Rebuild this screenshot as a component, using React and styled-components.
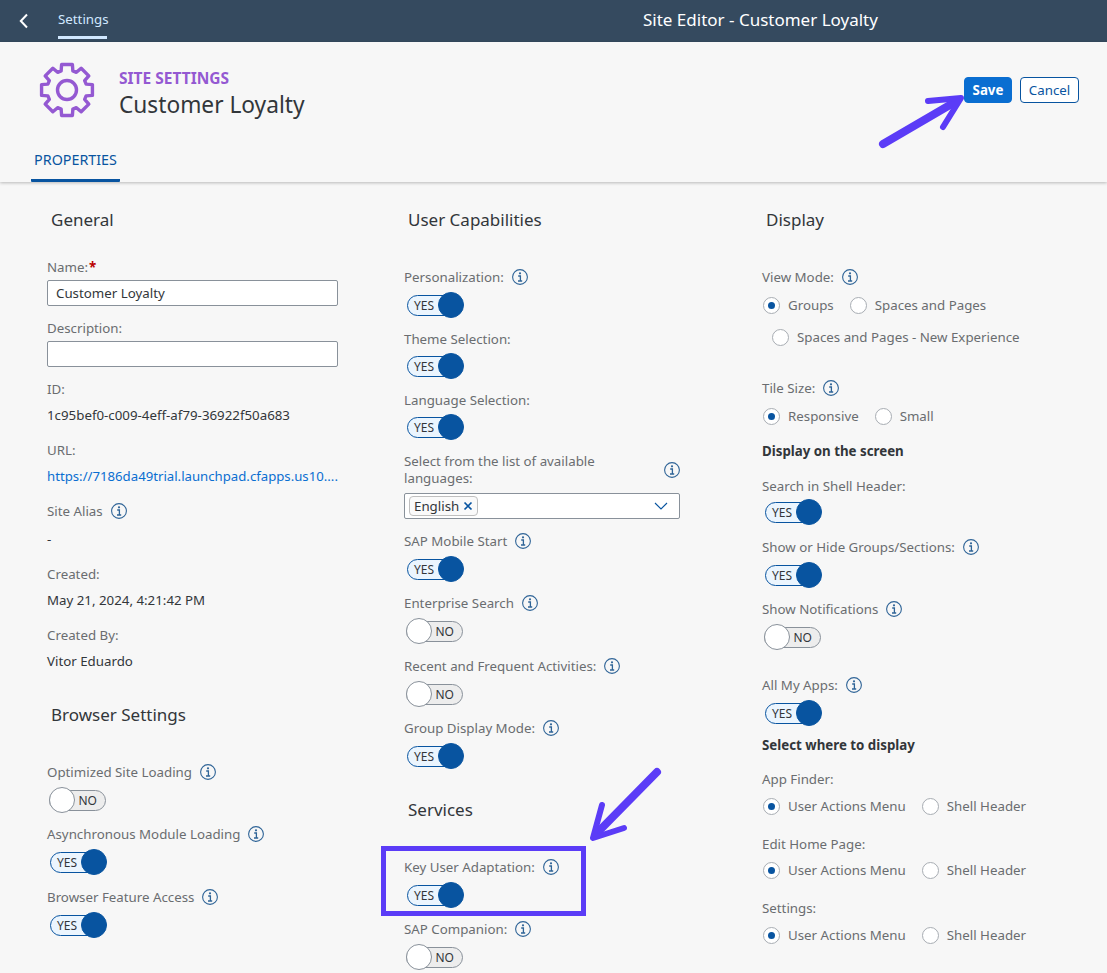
import React from "react";
import styled, { createGlobalStyle } from "styled-components";

const FONT = `"Noto Sans", "Open Sans", Arial, sans-serif`;

const GlobalStyle = createGlobalStyle`
  html, body {
    margin: 0;
    height: 973px;
    overflow: hidden;
    background: #f7f7f7;
    font-family: ${FONT};
  }
  * { box-sizing: border-box; }
`;

/* 8 squared teeth round the centre of a 64px box */
const gearPath = (() => {
  const rad = (d) => (d * Math.PI) / 180;
  const pt = (r, a) =>
    `${(32 + r * Math.cos(rad(a))).toFixed(2)} ${(32 + r * Math.sin(rad(a))).toFixed(2)}`;
  const parts = [];
  for (let i = 0; i < 8; i++) {
    const a = i * 45 - 90;
    parts.push(pt(20, a - 17), pt(26, a - 12), pt(26, a + 12), pt(20, a + 17));
  }
  return `M${parts.join("L")}Z`;
})();

export default function App() {
  return (
    <Page>
      <GlobalStyle />
      <ShellBar>
        <BackButton>
          <svg width="12" height="16" viewBox="0 0 12 16" fill="none">
            <path d="M9 1.5 2.8 8 9 14.5" stroke="#fff" strokeWidth="2" />
          </svg>
        </BackButton>
        <ShellTab>Settings</ShellTab>
        <ShellTitle>Site Editor - Customer Loyalty</ShellTitle>
      </ShellBar>

      <PageHeader>
        <TitleRow>
          <GearIcon width="64" height="64" viewBox="0 0 64 64" fill="none">
            <path d={gearPath} stroke="#9459d2" strokeWidth="3.4" strokeLinejoin="round" />
            <circle cx="32" cy="32" r="9.5" stroke="#9459d2" strokeWidth="3.4" />
          </GearIcon>
          <TitleText>
            <Overline>SITE SETTINGS</Overline>
            <PageTitle>Customer Loyalty</PageTitle>
          </TitleText>
          <Actions>
            <SaveButton>Save</SaveButton>
            <CancelButton>Cancel</CancelButton>
          </Actions>
        </TitleRow>
        <TabBar>
          <Tab>PROPERTIES</Tab>
        </TabBar>
      </PageHeader>

      <Columns>
        <Column>
          <SectionTitle>General</SectionTitle>
          <Label $mt={25}>
            <span>
              Name:<Required>*</Required>
            </span>
          </Label>
          <TextInput $mt={3} defaultValue="Customer Loyalty" />
          <Label $mt={12}>Description:</Label>
          <TextInput $mt={3} defaultValue="" />
          <Label $mt={12}>ID:</Label>
          <Value $mt={6}>1c95bef0-c009-4eff-af79-36922f50a683</Value>
          <Label $mt={15}>URL:</Label>
          <LinkValue $mt={6}>https://7186da49trial.launchpad.cfapps.us10....</LinkValue>
          <Label $mt={15}>
            Site Alias <InfoIcon />
          </Label>
          <Value $mt={8}>-</Value>
          <Label $mt={15}>Created:</Label>
          <Value $mt={6}>May 21, 2024, 4:21:42 PM</Value>
          <Label $mt={15}>Created By:</Label>
          <Value $mt={6}>Vitor Eduardo</Value>
          <SectionTitle $mt={32}>Browser Settings</SectionTitle>
          <Label $mt={35}>
            Optimized Site Loading <InfoIcon />
          </Label>
          <Toggle $mt={4} />
          <Label $mt={10}>
            Asynchronous Module Loading <InfoIcon />
          </Label>
          <Toggle $mt={4} on />
          <Label $mt={11}>
            Browser Feature Access <InfoIcon />
          </Label>
          <Toggle $mt={4} on />
        </Column>

        <Column>
          <SectionTitle>User Capabilities</SectionTitle>
          <Label $mt={35}>
            Personalization: <InfoIcon />
          </Label>
          <Toggle $mt={4} on />
          <Label $mt={10}>Theme Selection:</Label>
          <Toggle $mt={3} on />
          <Label $mt={10}>Language Selection:</Label>
          <Toggle $mt={3} on />
          <WrappedLabel $mt={12}>
            <span>Select from the list of available languages:</span>
            <InfoIcon />
          </WrappedLabel>
          <ComboBox $mt={6}>
            <Token>
              English
              <svg width="10" height="10" viewBox="0 0 10 10" fill="none">
                <path d="M1.5 1.5l7 7M8.5 1.5l-7 7" stroke="#0854a0" strokeWidth="1.7" />
              </svg>
            </Token>
            <svg width="14" height="8" viewBox="0 0 14 8" fill="none">
              <path d="M1 1l6 6 6-6" stroke="#0854a0" strokeWidth="1.1" />
            </svg>
          </ComboBox>
          <Label $mt={12}>
            SAP Mobile Start <InfoIcon />
          </Label>
          <Toggle $mt={4} on />
          <Label $mt={10}>
            Enterprise Search <InfoIcon />
          </Label>
          <Toggle $mt={4} />
          <Label $mt={11}>
            Recent and Frequent Activities: <InfoIcon />
          </Label>
          <Toggle $mt={4} />
          <Label $mt={10}>
            Group Display Mode: <InfoIcon />
          </Label>
          <Toggle $mt={4} on />
          <SectionTitle $mt={28}>Services</SectionTitle>
          <Label $mt={35}>
            Key User Adaptation: <InfoIcon />
          </Label>
          <Toggle $mt={4} on />
          <Label $mt={10}>
            SAP Companion: <InfoIcon />
          </Label>
          <Toggle $mt={4} />
        </Column>

        <Column>
          <SectionTitle>Display</SectionTitle>
          <Label $mt={35}>
            View Mode: <InfoIcon />
          </Label>
          <RadioRow $mt={5}>
            <Radio checked>Groups</Radio>
            <Radio>Spaces and Pages</Radio>
          </RadioRow>
          <RadioRow $mt={6} $indent={9}>
            <Radio>Spaces and Pages - New Experience</Radio>
          </RadioRow>
          <Label $mt={28}>
            Tile Size: <InfoIcon />
          </Label>
          <RadioRow $mt={5}>
            <Radio checked>Responsive</Radio>
            <Radio>Small</Radio>
          </RadioRow>
          <GroupTitle $mt={12}>Display on the screen</GroupTitle>
          <Label $mt={15}>Search in Shell Header:</Label>
          <Toggle $mt={2} on />
          <Label $mt={11}>
            Show or Hide Groups/Sections: <InfoIcon />
          </Label>
          <Toggle $mt={4} on />
          <Label $mt={10}>
            Show Notifications <InfoIcon />
          </Label>
          <Toggle $mt={4} />
          <Label $mt={24}>
            All My Apps: <InfoIcon />
          </Label>
          <Toggle $mt={4} on />
          <GroupTitle $mt={8}>Select where to display</GroupTitle>
          <Label $mt={14}>App Finder:</Label>
          <RadioRow $mt={4}>
            <Radio checked>User Actions Menu</Radio>
            <Radio>Shell Header</Radio>
          </RadioRow>
          <Label $mt={15}>Edit Home Page:</Label>
          <RadioRow $mt={3}>
            <Radio checked>User Actions Menu</Radio>
            <Radio>Shell Header</Radio>
          </RadioRow>
          <Label $mt={15}>Settings:</Label>
          <RadioRow $mt={4}>
            <Radio checked>User Actions Menu</Radio>
            <Radio>Shell Header</Radio>
          </RadioRow>
        </Column>
      </Columns>

      {/* Annotations drawn over the screenshot */}
      <Highlight />
      <Annotation width="1107" height="973" viewBox="0 0 1107 973" fill="none">
        <path
          d="M883 144 955 102M657 772 598 832"
          stroke="#5b3cf7"
          strokeWidth="8"
          strokeLinecap="round"
        />
        <path
          d="M928 101 961 98 943 127M602 805 593 838 624 828"
          stroke="#5b3cf7"
          strokeWidth="6"
          strokeLinecap="round"
          strokeLinejoin="round"
        />
      </Annotation>
    </Page>
  );
}

function InfoIcon() {
  return (
    <InfoSvg width="16" height="16" viewBox="0 0 16 16" fill="none">
      <circle cx="8" cy="8" r="7.4" stroke="#2f6497" strokeWidth="1.1" />
      <circle cx="8" cy="4.3" r="1.1" fill="#2f6497" />
      <path d="M6.2 7h2.2v4.8M6 12h4.2" stroke="#2f6497" strokeWidth="1.3" />
    </InfoSvg>
  );
}

function Toggle({ on, $mt }) {
  return (
    <ToggleWrap $mt={$mt} $on={on}>
      <ToggleTrack $on={on}>{on ? "YES" : "NO"}</ToggleTrack>
      <ToggleKnob $on={on} />
    </ToggleWrap>
  );
}

function Radio({ checked, children }) {
  return (
    <RadioItem>
      <RadioCircle $checked={checked} />
      {children}
    </RadioItem>
  );
}

const Page = styled.div`
  position: relative;
  width: 1107px;
  height: 973px;
  overflow: hidden;
  background: #f7f7f7;
`;

const ShellBar = styled.header`
  display: flex;
  align-items: center;
  height: 42px;
  padding-left: 18px;
  background: #354a5f;
`;

const BackButton = styled.div`
  display: flex;
  width: 40px;
`;

const ShellTab = styled.div`
  display: flex;
  align-items: center;
  align-self: flex-start;
  width: 49px;
  height: 39px;
  padding-top: 2px;
  border-bottom: 3px solid #d1e8ff;
  font-size: 13.3px;
  color: #d1e8ff;
`;

const ShellTitle = styled.div`
  margin-left: 536px;
  padding-bottom: 3px;
  font-size: 17px;
  color: #fff;
  white-space: nowrap;
`;

const PageHeader = styled.section`
  height: 140px;
  background: #f7f7f7;
  box-shadow: 0 1px 3px rgba(0, 0, 0, 0.25);
`;

const TitleRow = styled.div`
  display: flex;
  height: 99px;
  padding: 16px 28px 0 35px;
`;

const GearIcon = styled.svg`
  flex: none;
`;

const TitleText = styled.div`
  margin-left: 20px;
  padding-top: 10px;
`;

const Overline = styled.div`
  font-size: 15.5px;
  line-height: 20px;
  font-weight: 700;
  color: #9459d2;
`;

const PageTitle = styled.h1`
  margin: 1px 0 0;
  font-size: 22.7px;
  line-height: 32px;
  font-weight: 400;
  color: #32363a;
`;

const Actions = styled.div`
  display: flex;
  gap: 8px;
  margin-left: auto;
  padding-top: 19px;
`;

const SaveButton = styled.button`
  width: 48px;
  height: 26px;
  padding: 0;
  border: 1px solid #0a6ed1;
  border-radius: 4px;
  background: #0a6ed1;
  font: 700 13.3px ${FONT};
  color: #fff;
`;

const CancelButton = styled.button`
  width: 59px;
  height: 26px;
  padding: 0;
  border: 1px solid #0854a0;
  border-radius: 4px;
  background: #fff;
  font: 400 13.3px ${FONT};
  color: #0854a0;
`;

const TabBar = styled.nav`
  display: flex;
  height: 41px;
  padding-left: 31px;
`;

const Tab = styled.div`
  display: flex;
  justify-content: center;
  width: 89px;
  height: 41px;
  padding-top: 9px;
  border-bottom: 3px solid #0854a0;
  border-radius: 0 0 1px 1px;
  font-size: 14.3px;
  line-height: 20px;
  color: #0854a0;
`;

const Columns = styled.main`
  display: grid;
  grid-template-columns: 357px 358px 1fr;
  padding: 26px 0 0 47px;
`;

const Column = styled.div`
  display: flex;
  flex-direction: column;
  align-items: flex-start;
  min-width: 0;
`;

const SectionTitle = styled.h2`
  height: 24px;
  margin: ${({ $mt }) => $mt || 0}px 0 0 4px;
  font-size: 17px;
  line-height: 24px;
  font-weight: 400;
  color: #32363a;
`;

const GroupTitle = styled.h3`
  margin: ${({ $mt }) => $mt || 0}px 0 0;
  font-size: 13.3px;
  line-height: 20px;
  font-weight: 700;
  color: #32363a;
`;

const Label = styled.div`
  display: flex;
  align-items: center;
  gap: 8px;
  height: 20px;
  margin-top: ${({ $mt }) => $mt || 0}px;
  font-size: 13.3px;
  color: #6a6d70;
  white-space: nowrap;
`;

const WrappedLabel = styled.div`
  display: flex;
  align-items: center;
  justify-content: space-between;
  width: 276px;
  height: 34px;
  margin-top: ${({ $mt }) => $mt || 0}px;
  font-size: 13.3px;
  line-height: 17px;
  color: #6a6d70;

  span {
    width: 215px;
  }
`;

const Required = styled.span`
  margin-left: 1px;
  font-weight: 700;
  color: #bb0000;
`;

const InfoSvg = styled.svg`
  flex: none;
`;

const TextInput = styled.input`
  width: 291px;
  height: 26px;
  margin-top: ${({ $mt }) => $mt || 0}px;
  padding: 0 8px;
  border: 1px solid #89919a;
  border-radius: 2px;
  background: #fff;
  font: 400 13.3px ${FONT};
  color: #32363a;
`;

const Value = styled.div`
  height: 20px;
  margin-top: ${({ $mt }) => $mt || 0}px;
  font-size: 13.3px;
  line-height: 20px;
  color: #32363a;
`;

const LinkValue = styled.a`
  display: block;
  height: 20px;
  margin-top: ${({ $mt }) => $mt || 0}px;
  font-size: 13.2px;
  line-height: 20px;
  color: #0a6ed1;
  white-space: nowrap;
`;

const ToggleWrap = styled.div`
  position: relative;
  display: flex;
  align-items: center;
  width: 58px;
  height: 28px;
  margin: ${({ $mt }) => $mt || 0}px 0 0 ${({ $on }) => ($on ? 3 : 2)}px;
`;

const ToggleTrack = styled.div`
  display: flex;
  align-items: center;
  justify-content: ${({ $on }) => ($on ? "flex-start" : "flex-end")};
  width: ${({ $on }) => ($on ? 48 : 57)}px;
  height: 21px;
  padding: ${({ $on }) => ($on ? "0 0 0 6px" : "0 8px 0 0")};
  border: 1px solid ${({ $on }) => ($on ? "#0854a0" : "#89919a")};
  border-radius: 11px;
  background: ${({ $on }) => ($on ? "#ebf5fe" : "#ededed")};
  font-size: 12px;
  color: #32363a;
`;

const ToggleKnob = styled.div`
  position: absolute;
  top: 1px;
  left: ${({ $on }) => ($on ? 31 : 0)}px;
  width: 26px;
  height: 26px;
  border: 1px solid ${({ $on }) => ($on ? "#0854a0" : "#89919a")};
  border-radius: 50%;
  background: ${({ $on }) => ($on ? "#0854a0" : "#fff")};
`;

const ComboBox = styled.div`
  display: flex;
  align-items: center;
  justify-content: space-between;
  width: 276px;
  height: 26px;
  margin-top: ${({ $mt }) => $mt || 0}px;
  padding: 0 11px 0 4px;
  border: 1px solid #89919a;
  border-radius: 2px;
  background: #fff;
`;

const Token = styled.div`
  display: flex;
  align-items: center;
  gap: 4px;
  height: 20px;
  padding: 0 4px;
  border: 1px solid #bfbfbf;
  border-radius: 4px;
  background: #fafafa;
  font-size: 13.3px;
  color: #32363a;
`;

const RadioRow = styled.div`
  display: flex;
  align-items: center;
  gap: 16px;
  height: 26px;
  margin-top: ${({ $mt }) => $mt || 0}px;
  padding-left: ${({ $indent }) => ($indent || 0) + 1}px;
`;

const RadioItem = styled.div`
  display: flex;
  align-items: center;
  gap: 8px;
  font-size: 13.3px;
  color: #6a6d70;
  white-space: nowrap;
`;

const RadioCircle = styled.span`
  display: flex;
  align-items: center;
  justify-content: center;
  width: 17px;
  height: 17px;
  border: 1px solid #a8adb3;
  border-radius: 50%;
  background: #fff;

  &::after {
    content: "";
    display: ${({ $checked }) => ($checked ? "block" : "none")};
    width: 7px;
    height: 7px;
    border-radius: 50%;
    background: #0854a0;
  }
`;

const Highlight = styled.div`
  position: absolute;
  left: 381px;
  top: 846px;
  width: 205px;
  height: 70px;
  border: 5px solid #5b3cf7;
`;

const Annotation = styled.svg`
  position: absolute;
  left: 0;
  top: 0;
  pointer-events: none;
`;
